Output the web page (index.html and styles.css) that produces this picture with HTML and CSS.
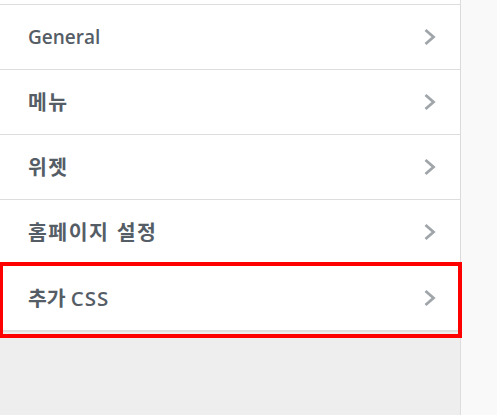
FILE: index.html
```html
<!DOCTYPE html>
<html lang="ko">
<head>
<meta charset="utf-8">
<link rel="stylesheet" href="styles.css">
</head>
<body>
<div class="layout">
  <div class="panel">
    <div class="top-stub"></div>
    <ul class="sections">
      <li class="section"><span class="title">General</span><svg class="chev" viewBox="0 0 14 18" width="14" height="18"><path d="M2.5 2 L10.5 9 L2.5 16" fill="none" stroke="currentColor" stroke-width="2.8"/></svg></li>
      <li class="section"><span class="title"><span class="ko">메뉴</span></span><svg class="chev" viewBox="0 0 14 18" width="14" height="18"><path d="M2.5 2 L10.5 9 L2.5 16" fill="none" stroke="currentColor" stroke-width="2.8"/></svg></li>
      <li class="section"><span class="title"><span class="ko">위젯</span></span><svg class="chev" viewBox="0 0 14 18" width="14" height="18"><path d="M2.5 2 L10.5 9 L2.5 16" fill="none" stroke="currentColor" stroke-width="2.8"/></svg></li>
      <li class="section"><span class="title"><span class="ko">홈페이지 설정</span></span><svg class="chev" viewBox="0 0 14 18" width="14" height="18"><path d="M2.5 2 L10.5 9 L2.5 16" fill="none" stroke="currentColor" stroke-width="2.8"/></svg></li>
      <li class="section last"><span class="title"><span class="ko ko-tight">추가</span> <span class="wide">CSS</span></span><svg class="chev" viewBox="0 0 14 18" width="14" height="18"><path d="M2.5 2 L10.5 9 L2.5 16" fill="none" stroke="currentColor" stroke-width="2.8"/></svg></li>
    </ul>
    <div class="highlight"></div>
  </div>
  <div class="preview"></div>
</div>
</body>
</html>
```
FILE: styles.css
```css
html, body {
  margin: 0;
  padding: 0;
  height: 100%;
}
body {
  font-family: "Open Sans", "Noto Sans CJK KR", sans-serif;
  background: #eeeeee;
}
.layout {
  display: flex;
  height: 415px;
}
.panel {
  position: relative;
  width: 460px;
  border-right: 1px solid #dddddd;
  background: #eeeeee;
}
.top-stub {
  height: 4px;
  background: #ffffff;
  border-bottom: 1px solid #dddddd;
}
.sections {
  list-style: none;
  margin: 0;
  padding: 0;
  box-shadow: 0 1px 1px rgba(0,0,0,0.06);
}
.section {
  display: flex;
  align-items: center;
  justify-content: space-between;
  height: 64px;
  padding: 0 23px 0 28px;
  background: #ffffff;
  border-bottom: 1px solid #dddddd;
  color: #555d66;
}
.section.last {
  height: 65px;
}
.title {
  font-size: 19px;
  font-weight: 600;
  line-height: 24px;
  color: #555d66;
}
.ko {
  font-family: "Noto Sans CJK KR", sans-serif;
  font-size: 20.5px;
  font-weight: 600;
  letter-spacing: 1.5px;
}
.ko-tight {
  letter-spacing: 0;
}
.wide {
  font-size: 20.5px;
  letter-spacing: 1px;
}
.chev {
  color: #a0a5aa;
  display: block;
}
.highlight {
  position: absolute;
  left: -1px;
  top: 262px;
  width: 455px;
  height: 68px;
  border: 4px solid #ff0000;
  pointer-events: none;
}
.preview {
  flex: 1;
  background: #f9f9f9;
}
```
